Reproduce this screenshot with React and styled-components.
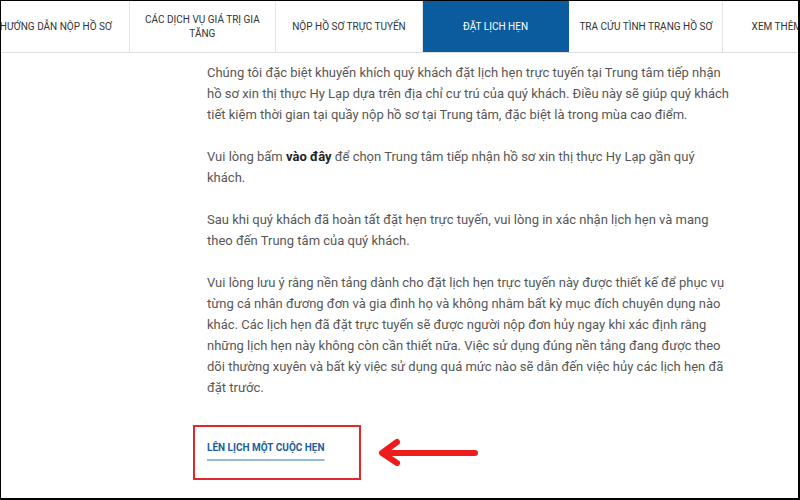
import React from "react";
import styled, { createGlobalStyle } from "styled-components";

const Global = createGlobalStyle`
  html, body {
    margin: 0;
    padding: 0;
    background: #fff;
  }
  body {
    font-family: Roboto, "Liberation Sans", Arial, sans-serif;
  }
  * {
    box-sizing: border-box;
  }
`;

const Frame = styled.div`
  width: 800px;
  height: 500px;
  overflow: hidden;
  background: #fff;
  border-style: solid;
  border-color: #000;
  border-width: 1px 2px 2px 1px;
`;

const Nav = styled.nav`
  height: 52px;
  border-bottom: 1px solid #dedede;
  overflow: hidden;
`;

const TabRow = styled.ul`
  display: flex;
  list-style: none;
  margin: 0 0 0 -18px;
  padding: 0;
  height: 100%;
`;

const Tab = styled.li`
  flex: 0 0 ${(p) => p.$width || 146.6}px;
  display: flex;
  align-items: center;
  justify-content: center;
  text-align: center;
  padding: 0 10px;
  font-size: 10px;
  line-height: 14px;
  text-transform: uppercase;
  white-space: ${(p) => (p.$wrap ? "normal" : "nowrap")};
  color: ${(p) => (p.$active ? "#fff" : "#333")};
  background: ${(p) => (p.$active ? "#0b5c9e" : "#fff")};
  border-right: 1px solid ${(p) => (p.$active ? "#0b5c9e" : "#e4e4e4")};
`;

const Content = styled.main`
  padding: 9px 60px 0 206px;
`;

const Paragraph = styled.p`
  margin: 0 0 21px;
  font-size: 13px;
  line-height: 21px;
  color: #575757;
  width: 525px;
`;

const Strong = styled.b`
  color: #222;
  font-weight: 700;
`;

const CtaRow = styled.div`
  display: flex;
  align-items: center;
  gap: 17px;
  margin: 27px 0 0 -14px;
`;

const Highlight = styled.div`
  width: 168px;
  height: 55px;
  border: 2px solid #e3262b;
  padding: 9px 0 0 12px;
`;

const CtaLink = styled.a`
  font-size: 10px;
  font-weight: 700;
  line-height: 14px;
  color: #1b5f9c;
  text-decoration: underline;
  text-decoration-color: #94b8d9;
  text-decoration-thickness: 2px;
  text-underline-offset: 8px;
`;

const tabs = [
  { label: "Hướng dẫn nộp hồ sơ" },
  { label: "Các dịch vụ giá trị gia tăng", wrap: true },
  { label: "Nộp hồ sơ trực tuyến" },
  { label: "Đặt lịch hẹn", active: true },
  { label: "Tra cứu tình trạng hồ sơ" },
  { label: "Xem thêm", width: 108 },
];

const Arrow = () => (
  <svg width="102" height="30" viewBox="0 0 102 30">
    <g
      fill="none"
      stroke="#ee1c1c"
      strokeWidth="6"
      strokeLinecap="round"
      strokeLinejoin="round"
    >
      <line x1="5" y1="15" x2="97" y2="15" />
      <polyline points="19,4 4,15 19,25" />
    </g>
  </svg>
);

export default function App() {
  return (
    <>
      <Global />
      <Frame>
        <Nav>
          <TabRow>
            {tabs.map((t) => (
              <Tab
                key={t.label}
                $active={t.active}
                $wrap={t.wrap}
                $width={t.width}
              >
                {t.label}
              </Tab>
            ))}
          </TabRow>
        </Nav>
        <Content>
          <Paragraph>
            Chúng tôi đặc biệt khuyến khích quý khách đặt lịch hẹn trực tuyến
            tại Trung tâm tiếp nhận hồ sơ xin thị thực Hy Lạp dựa trên địa chỉ
            cư trú của quý khách. Điều này sẽ giúp quý khách tiết kiệm thời gian
            tại quầy nộp hồ sơ tại Trung tâm, đặc biệt là trong mùa cao điểm.
          </Paragraph>
          <Paragraph>
            Vui lòng bấm <Strong>vào đây</Strong> để chọn Trung tâm tiếp nhận
            hồ sơ xin thị thực Hy Lạp gần quý khách.
          </Paragraph>
          <Paragraph>
            Sau khi quý khách đã hoàn tất đặt hẹn trực tuyến, vui lòng in xác
            nhận lịch hẹn và mang theo đến Trung tâm của quý khách.
          </Paragraph>
          <Paragraph>
            Vui lòng lưu ý rằng nền tảng dành cho đặt lịch hẹn trực tuyến này
            được thiết kế để phục vụ từng cá nhân đương đơn và gia đình họ và
            không nhằm bất kỳ mục đích chuyên dụng nào khác. Các lịch hẹn đã đặt
            trực tuyến sẽ được người nộp đơn hủy ngay khi xác định rằng những
            lịch hẹn này không còn cần thiết nữa. Việc sử dụng đúng nền tảng
            đang được theo dõi thường xuyên và bất kỳ việc sử dụng quá mức nào
            sẽ dẫn đến việc hủy các lịch hẹn đã đặt trước.
          </Paragraph>
          <CtaRow>
            <Highlight>
              <CtaLink href="#">LÊN LỊCH MỘT CUỘC HẸN</CtaLink>
            </Highlight>
            <Arrow />
          </CtaRow>
        </Content>
      </Frame>
    </>
  );
}
